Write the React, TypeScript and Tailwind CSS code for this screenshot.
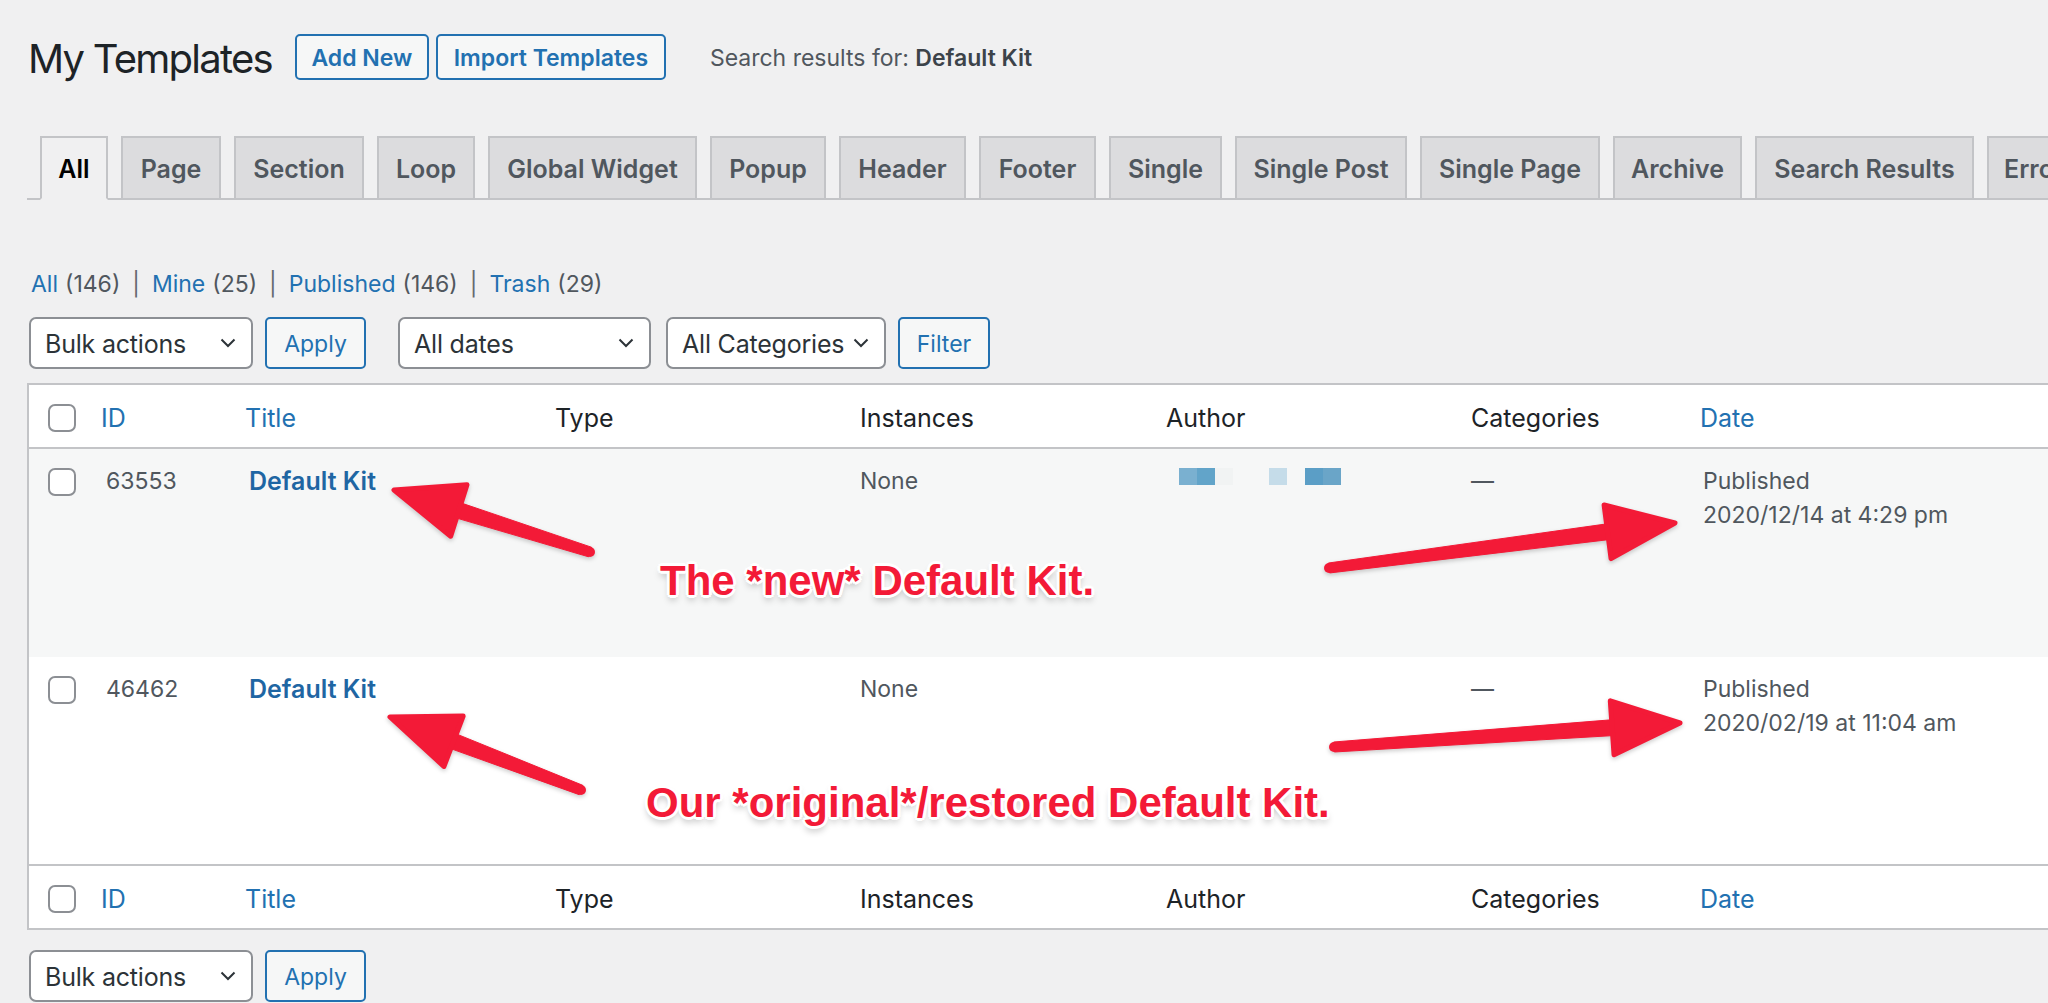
import React from "react";

const tabs = [
  { label: "All", w: "w-[68px]", active: true },
  { label: "Page", w: "w-[100px]" },
  { label: "Section", w: "w-[130px]" },
  { label: "Loop", w: "w-[98px]" },
  { label: "Global Widget", w: "w-[209px]" },
  { label: "Popup", w: "w-[116px]" },
  { label: "Header", w: "w-[127px]" },
  { label: "Footer", w: "w-[117px]" },
  { label: "Single", w: "w-[113px]" },
  { label: "Single Post", w: "w-[172px]" },
  { label: "Single Page", w: "w-[180px]" },
  { label: "Archive", w: "w-[129px]" },
  { label: "Search Results", w: "w-[219px]" },
  { label: "Error 404", w: "w-[150px]" },
];

const cols = "grid grid-cols-[59px_143px_306px_305px_306px_305px_232px_1fr]";

// blurred author name, as pixel blocks
const authorBlocks = [
  "bg-[#7ab0d0]",
  "bg-[#62a4c9]",
  "bg-[#f1f3f3]",
  "bg-transparent",
  "bg-transparent",
  "bg-[#c5dce9]",
  "bg-transparent",
  "bg-[#5b9ec6]",
  "bg-[#6aa5c8]",
];

function Chevron() {
  return (
    <svg width="16" height="10" viewBox="0 0 16 10" fill="none" className="shrink-0">
      <path d="M1.5 1.5 8 8l6.5-6.5" stroke="#2c3338" strokeWidth="2" />
    </svg>
  );
}

function Select({ label, w }: { label: string; w: string }) {
  return (
    <div
      className={`${w} h-[52px] shrink-0 flex items-center justify-between pl-[14px] pr-[15px] bg-white border-2 border-[#8c8f94] rounded-[7px] text-[25px] text-[#2c3338]`}
    >
      <span className="whitespace-nowrap pt-[3px] tracking-[-0.2px]">{label}</span>
      <Chevron />
    </div>
  );
}

function SecondaryButton({ label, w }: { label: string; w: string }) {
  return (
    <div
      className={`${w} h-[52px] shrink-0 flex items-center justify-center pt-[3px] bg-[#f6f7f7] border-2 border-[#2271b1] rounded-[5px] text-[23px] text-[#2271b1]`}
    >
      {label}
    </div>
  );
}

function Checkbox() {
  return <div className="w-[28px] h-[28px] bg-white border-2 border-[#8c8f94] rounded-[7px]" />;
}

function HeaderRow({ top }: { top?: boolean }) {
  return (
    <div
      className={`${cols} h-[64px] items-center text-[25px] text-[#1d2327] ${
        top ? "border-b-2" : "border-t-2"
      } border-[#c3c4c7]`}
    >
      <div className="pl-[19px] pt-[3px]">
        <Checkbox />
      </div>
      <div className="pl-[13px] pt-[5px] text-[#2271b1]">ID</div>
      <div className="pl-[14px] pt-[5px] text-[#2271b1]">Title</div>
      <div className="pl-[18px] pt-[5px]">Type</div>
      <div className="pl-[18px] pt-[5px]">Instances</div>
      <div className="pl-[18px] pt-[5px]">Author</div>
      <div className="pl-[18px] pt-[5px]">Categories</div>
      <div className="pl-[15px] pt-[5px] text-[#2271b1]">Date</div>
    </div>
  );
}

function Row({
  id,
  date,
  striped,
  author,
  h,
}: {
  id: string;
  date: string;
  striped?: boolean;
  author?: boolean;
  h: string;
}) {
  return (
    <div className={`${cols} ${h} ${striped ? "bg-[#f6f7f7]" : "bg-white"} text-[23px] leading-[34px] text-[#50575e]`}>
      <div className="pl-[19px] pt-[19px]">
        <Checkbox />
      </div>
      <div className="pl-[18px] pt-[15px]">{id}</div>
      <div className="pl-[18px] pt-[15px] text-[25px] font-semibold text-[#1f66a3]">Default Kit</div>
      <div />
      <div className="pl-[18px] pt-[15px]">None</div>
      <div className="pl-[31px] pt-[19px]">
        {author && (
          <div className="flex">
            {authorBlocks.map((c, i) => (
              <div key={i} className={`w-[18px] h-[17px] ${c}`} />
            ))}
          </div>
        )}
      </div>
      <div className="pl-[18px] pt-[15px]">—</div>
      <div className="pl-[18px] pt-[15px] flex flex-col">
        <span>Published</span>
        <span>{date}</span>
      </div>
    </div>
  );
}

function Arrow({ tx, ty, px, py }: { tx: number; ty: number; px: number; py: number }) {
  const dx = px - tx;
  const dy = py - ty;
  const len = Math.hypot(dx, dy);
  const ux = dx / len;
  const uy = dy / len;
  const nx = -uy;
  const ny = ux;
  const bx = px - ux * 68;
  const by = py - uy * 68;
  const head = `${px},${py} ${bx + nx * 27},${by + ny * 27} ${bx - nx * 27},${by - ny * 27}`;
  const sx = bx + ux * 6;
  const sy = by + uy * 6;
  const shaft = `${tx + nx * 5},${ty + ny * 5} ${sx + nx * 8},${sy + ny * 8} ${sx - nx * 8},${sy - ny * 8} ${tx - nx * 5},${ty - ny * 5}`;
  return (
    <g fill="#f31a37" stroke="#f31a37" strokeLinejoin="round">
      <circle cx={tx} cy={ty} r="5" stroke="none" />
      <polygon points={shaft} strokeWidth="1" />
      <polygon points={head} strokeWidth="5" />
    </g>
  );
}

const callout =
  "absolute whitespace-nowrap font-['Liberation_Sans',Arial,sans-serif] font-bold text-[42px] leading-[42px] text-[#f31a37] [text-shadow:-2px_-2px_0_#fff,2px_-2px_0_#fff,-2px_2px_0_#fff,2px_2px_0_#fff,0_3px_0_#fff,0_-3px_0_#fff,3px_0_0_#fff,-3px_0_0_#fff,0_5px_7px_rgba(0,0,0,0.28)]";

export default function App() {
  return (
    <div className="relative w-[2048px] h-[1003px] overflow-hidden bg-[#f0f0f1] font-[Inter,sans-serif] text-[#1d2327]">
      <div className="pl-[27px]">
        {/* Title bar */}
        <div className="flex items-center h-[46px] mt-[34px]">
          <h1 className="ml-[1px] pt-[3px] text-[40px] tracking-[-1.75px] leading-none font-normal text-[#1d2327] whitespace-nowrap">
            My Templates
          </h1>
          <div className="ml-[23px] w-[134px] h-[46px] flex items-center justify-center pt-[2px] bg-[#f6f7f7] border-2 border-[#2271b1] rounded-[5px] text-[23px] font-semibold text-[#2271b1]">
            Add New
          </div>
          <div className="ml-[7px] w-[230px] h-[46px] flex items-center justify-center pt-[2px] bg-[#f6f7f7] border-2 border-[#2271b1] rounded-[5px] text-[23px] font-semibold text-[#2271b1]">
            Import Templates
          </div>
          <div className="ml-[44px] pt-[3px] text-[23px] text-[#50575e] whitespace-nowrap">
            Search results for: <strong className="font-semibold text-[#3c434a]">Default Kit</strong>
          </div>
        </div>

        {/* Type tabs */}
        <div className="mt-[56px] flex gap-[13px] pl-[13px] border-b-2 border-[#c3c4c7] w-[2100px]">
          {tabs.map((t) => (
            <div
              key={t.label}
              className={`${t.w} h-[64px] -mb-[2px] pt-[4px] shrink-0 flex items-center justify-center whitespace-nowrap border-2 text-[25px] font-semibold ${
                t.active
                  ? "bg-[#f0f0f1] border-[#c3c4c7] border-b-[#f0f0f1] text-black"
                  : "bg-[#dcdcde] border-[#c3c4c7] text-[#50575e]"
              }`}
            >
              {t.label}
            </div>
          ))}
        </div>

        {/* Views */}
        <div className="mt-[67px] h-[34px] flex items-center text-[23px] text-[#646970] whitespace-nowrap">
          <span className="ml-[4px] text-[#2271b1]">All</span>
          <span className="ml-[7px] text-[#50575e]">(146)</span>
          <span className="mx-[12px]">|</span>
          <span className="text-[#2271b1]">Mine</span>
          <span className="ml-[7px] text-[#50575e]">(25)</span>
          <span className="mx-[12px]">|</span>
          <span className="text-[#2271b1]">Published</span>
          <span className="ml-[7px] text-[#50575e]">(146)</span>
          <span className="mx-[12px]">|</span>
          <span className="text-[#2271b1]">Trash</span>
          <span className="ml-[7px] text-[#50575e]">(29)</span>
        </div>

        {/* Filters */}
        <div className="mt-[16px] flex items-center ml-[2px]">
          <Select label="Bulk actions" w="w-[224px]" />
          <div className="ml-[12px]">
            <SecondaryButton label="Apply" w="w-[101px]" />
          </div>
          <div className="ml-[32px]">
            <Select label="All dates" w="w-[253px]" />
          </div>
          <div className="ml-[15px]">
            <Select label="All Categories" w="w-[220px]" />
          </div>
          <div className="ml-[12px]">
            <SecondaryButton label="Filter" w="w-[92px]" />
          </div>
        </div>

        {/* Table */}
        <div className="mt-[14px] w-[2100px] border-2 border-[#c3c4c7] bg-white">
          <HeaderRow top />
          <Row id="63553" date="2020/12/14 at 4:29 pm" striped author h="h-[208px]" />
          <Row id="46462" date="2020/02/19 at 11:04 am" h="h-[207px]" />
          <HeaderRow />
        </div>

        {/* Bottom bulk actions */}
        <div className="mt-[20px] flex items-center ml-[2px]">
          <Select label="Bulk actions" w="w-[224px]" />
          <div className="ml-[12px]">
            <SecondaryButton label="Apply" w="w-[101px]" />
          </div>
        </div>
      </div>

      {/* Annotations */}
      <svg
        className="absolute left-0 top-0 pointer-events-none drop-shadow-[0_2px_2px_rgba(0,0,0,0.2)]"
        width="2048"
        height="1003"
        viewBox="0 0 2048 1003"
      >
        <Arrow tx={590} ty={552} px={394} py={490} />
        <Arrow tx={1329} ty={568} px={1675} py={523} />
        <Arrow tx={581} ty={790} px={390} py={717} />
        <Arrow tx={1334} ty={747} px={1680} py={723} />
      </svg>
      <div className={`${callout} left-[660px] top-[560px]`}>The *new* Default Kit.</div>
      <div className={`${callout} left-[646px] top-[782px]`}>Our *original*/restored Default Kit.</div>
    </div>
  );
}
